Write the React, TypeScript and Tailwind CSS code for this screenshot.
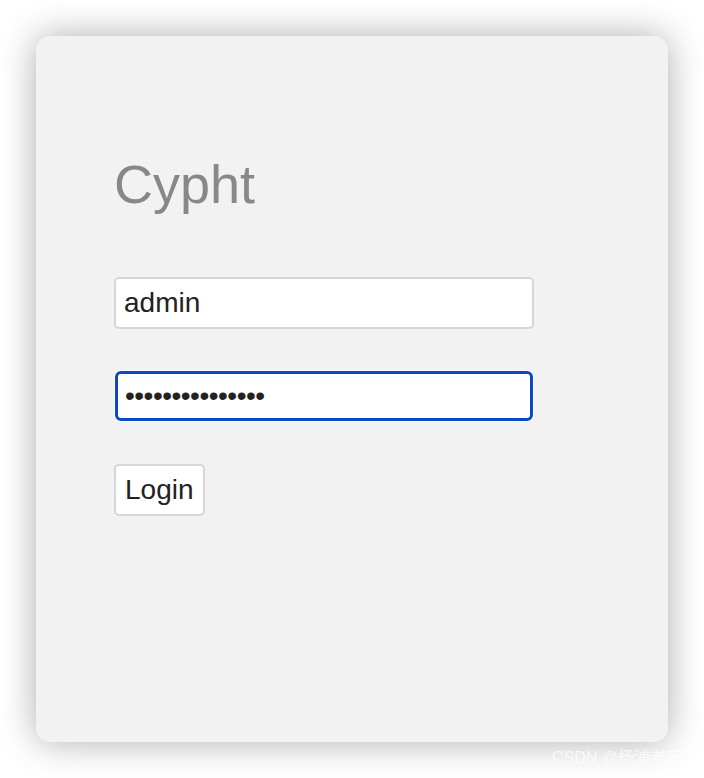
export default function App() {
  return (
    <div className="relative min-h-[778px] w-[704px] bg-white p-[36px] font-['Liberation_Sans',Arial,sans-serif]">
      <div className="h-[706px] w-[632px] rounded-[14px] bg-[#f2f2f2] pl-[78px] pt-[117px] shadow-[0_0_36px_rgba(0,0,0,0.32)]">
        <h1 className="text-[54px] leading-[62px] text-[#888888]">Cypht</h1>

        <form className="mt-[62px] flex flex-col items-start" onSubmit={(e) => e.preventDefault()}>
          <input
            type="text"
            defaultValue="admin"
            className="h-[52px] w-[420px] rounded-[5px] border-2 border-[#d6d6d6] bg-white px-[8px] text-[28px] text-[#222] outline-none"
          />
          <div className="mt-[41px] rounded-[7px] bg-white p-[1px]">
            <input
              type="password"
              defaultValue="cyphtpassword12"
              className="h-[50px] w-[418px] rounded-[6px] border-[3px] border-[#0b48c1] bg-white px-[7px] text-[28px] tracking-[-0.5px] text-[#222] outline-none"
            />
          </div>
          <button
            type="submit"
            className="mt-[42px] h-[52px] rounded-[5px] border-2 border-[#d6d6d6] bg-white px-[9px] text-[28px] text-[#222]"
          >
            Login
          </button>
        </form>
      </div>

      <span className="absolute left-[552px] top-[748px] text-[16px] leading-[20px] text-white/70 font-['Liberation_Sans','Noto_Sans_CJK_SC',sans-serif]">
        CSDN @杨浦老苏
      </span>
    </div>
  );
}
